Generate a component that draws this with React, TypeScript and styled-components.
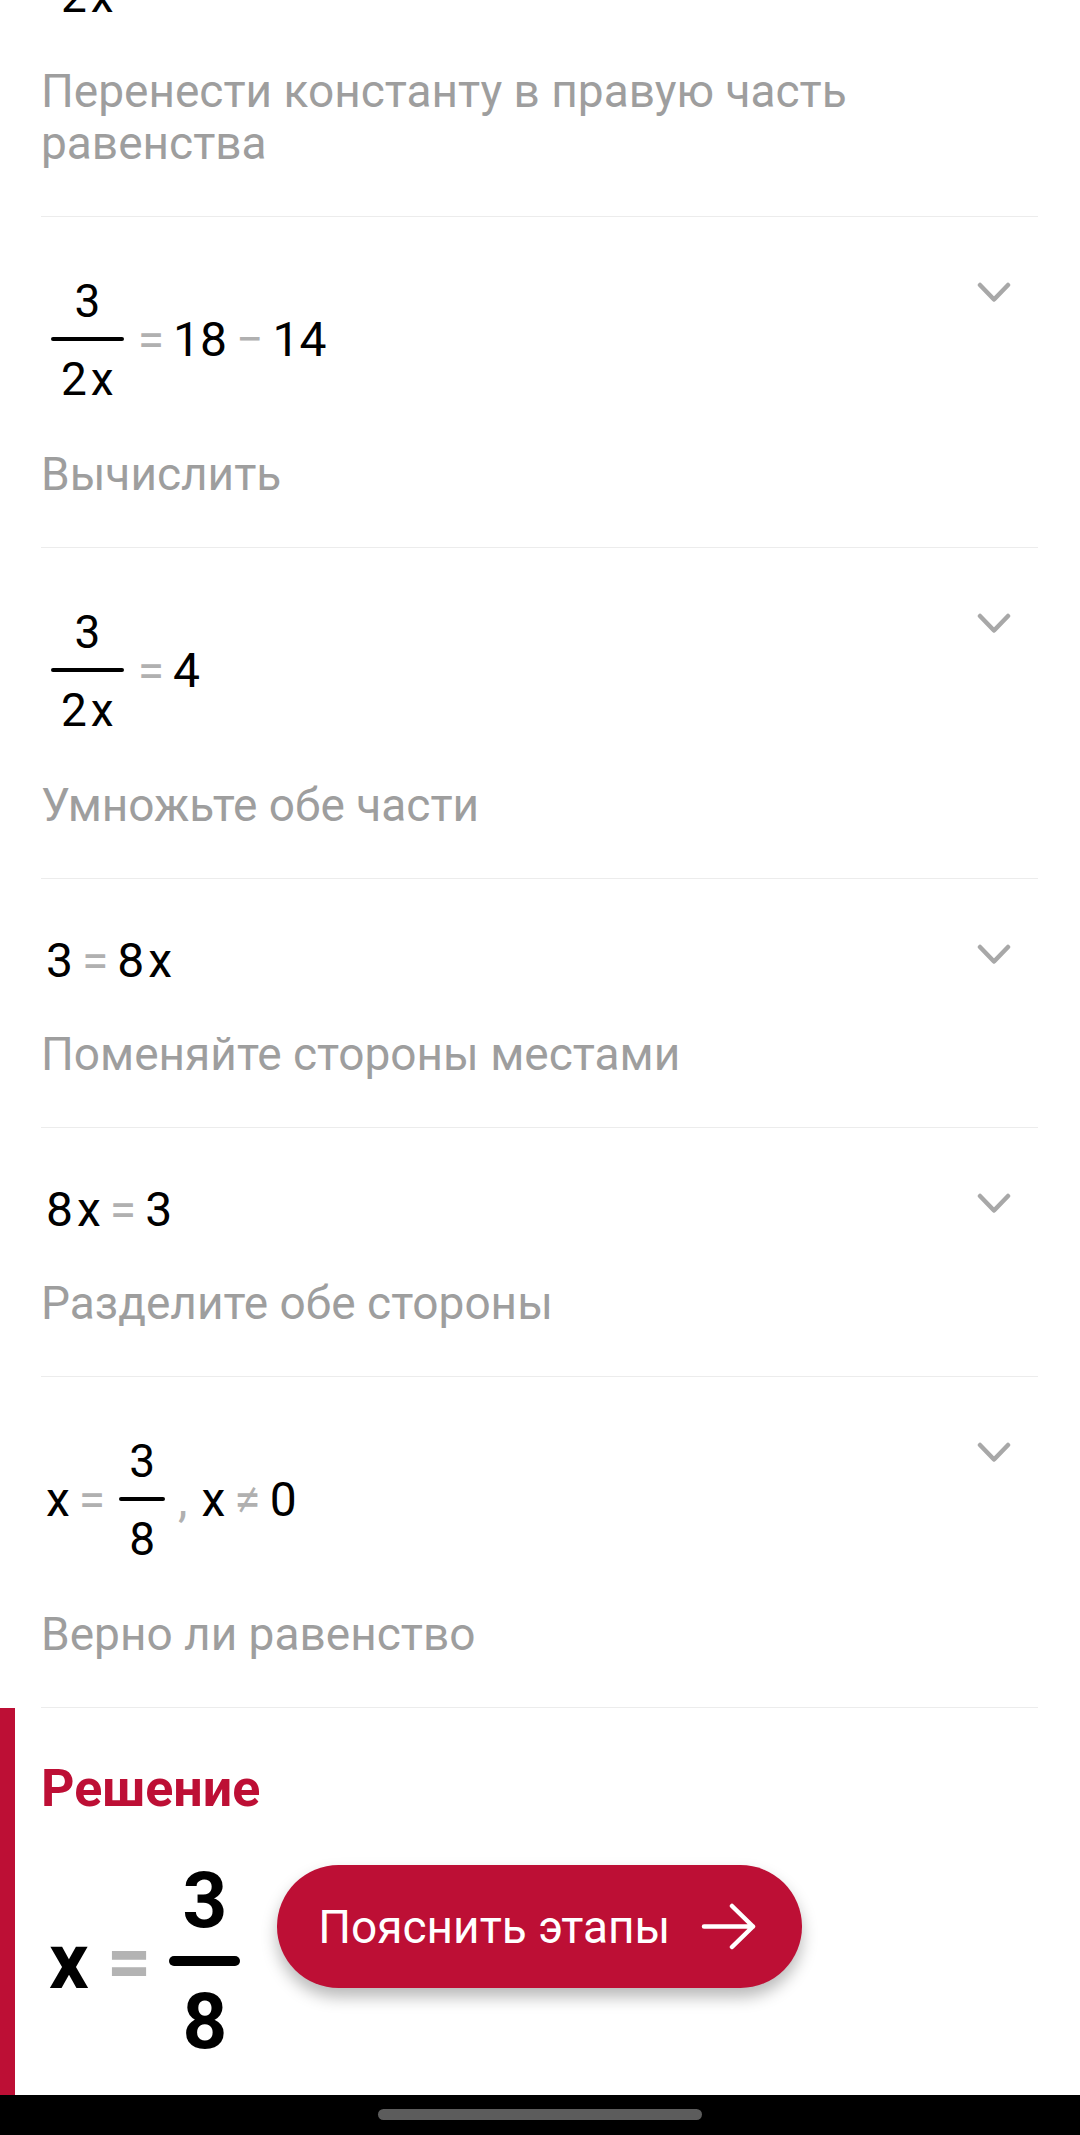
import React from "react"
import styled, { createGlobalStyle } from "styled-components"

const CRIMSON = "#bd0f35"

const GlobalStyle = createGlobalStyle`
  html, body {
    margin: 0;
    padding: 0;
    background: #fff;
  }
  body {
    font-family: Roboto, "Noto Sans", "Liberation Sans", sans-serif;
  }
`

const Page = styled.div`
  width: 1080px;
  height: 2135px;
  display: flex;
  flex-direction: column;
  overflow: hidden;
  background: #fff;
`

const StepList = styled.div`
  flex: none;
  margin-top: -166px;
  padding: 0 42px 0 41px;
`

const Step = styled.div`
  display: flex;
  align-items: flex-start;
  padding: 54px 0 47px;
  border-bottom: 1px solid #ececec;
`

const StepBody = styled.div`
  flex: 1;
  display: flex;
  flex-direction: column;
`

const Equation = styled.div`
  display: flex;
  align-items: center;
  padding-left: 5px;
  font-size: 48px;
  line-height: 56px;
  color: #000;
`

const Hint = styled.div`
  margin-top: 39px;
  font-size: 46px;
  line-height: 52px;
  color: #9e9e9e;
`

const Expand = styled.div`
  flex: none;
  display: flex;
  margin: 11px 27px 0 0;
`

const Op = styled.span`
  color: #b0b0b0;
  margin: 0 9px;
`

const Comma = styled.span`
  color: #b0b0b0;
  margin: 0 14px 0 8px;
`

const Var = styled.span<{ $tight?: boolean }>`
  margin-left: ${p => (p.$tight ? 0 : 4)}px;
`

const Frac = styled.span<{ $pad: number }>`
  display: inline-flex;
  flex-direction: column;
  align-items: center;
  margin: 0 5px;
  padding: 7px 0;

  & > span.part {
    font-size: 46px;
    line-height: 46px;
    padding: 0 ${p => p.$pad}px;
  }
`

const FracBar = styled.span<{ $thick: number }>`
  align-self: stretch;
  height: ${p => p.$thick}px;
  background: #000;
  border-radius: ${p => p.$thick / 2}px;
  margin: 13px 0 15px;
`

const Solution = styled.section`
  flex: 1;
  border-left: 15px solid ${CRIMSON};
  padding: 53px 0 0 26px;
`

const SolutionTitle = styled.h2`
  margin: 0;
  font-size: 52px;
  line-height: 56px;
  font-weight: 700;
  color: ${CRIMSON};
`

const AnswerRow = styled.div`
  display: flex;
  align-items: flex-start;
  margin-top: 46px;
  padding-left: 8px;
`

const AnswerMath = styled.div`
  display: flex;
  align-items: center;
  font-size: 78px;
  line-height: 76px;
  font-weight: 700;
  color: #000;
`

const AnswerOp = styled.span`
  color: #b3b3b3;
  margin: 0 18px;
`

const AnswerFrac = styled.span`
  display: inline-flex;
  flex-direction: column;
  align-items: center;

  & > span.part {
    padding: 0 13px;
  }
`

const AnswerBar = styled.span`
  align-self: stretch;
  height: 10px;
  border-radius: 5px;
  background: #000;
  margin: 17px 0 18px;
`

const ExplainButton = styled.button`
  display: flex;
  align-items: center;
  gap: 31px;
  height: 123px;
  margin: 2px 0 0 37px;
  padding: 0 45px 0 41px;
  border: none;
  border-radius: 62px;
  background: ${CRIMSON};
  color: #fff;
  font-family: Roboto, "Noto Sans", "Liberation Sans", sans-serif;
  font-size: 46px;
  box-shadow: 0 9px 16px rgba(0, 0, 0, 0.28);
  cursor: pointer;
`

const NavBar = styled.div`
  flex: none;
  height: 40px;
  background: #000;
  display: flex;
  align-items: center;
  justify-content: center;
`

const HomePill = styled.div`
  width: 324px;
  height: 11px;
  border-radius: 6px;
  background: #5c5c5c;
  margin-top: -2px;
`

const Chevron = () => (
  <svg width="34" height="21" viewBox="0 0 34 21">
    <polyline
      points="3,3 17,17.5 31,3"
      fill="none"
      stroke="#a8a8a8"
      strokeWidth="4.5"
      strokeLinecap="round"
      strokeLinejoin="round"
    />
  </svg>
)

const ArrowRight = () => (
  <svg width="56" height="47" viewBox="0 0 56 47">
    <path
      d="M3 23.5H52M31 3L52 23.5L31 44"
      fill="none"
      stroke="#fff"
      strokeWidth="4.5"
      strokeLinecap="round"
      strokeLinejoin="round"
    />
  </svg>
)

const Fraction: React.FC<{ num: React.ReactNode; den: React.ReactNode }> = ({ num, den }) => (
  <Frac $pad={10}>
    <span className="part">{num}</span>
    <FracBar $thick={4} />
    <span className="part">{den}</span>
  </Frac>
)

const TwoX = () => (
  <>
    2<Var>x</Var>
  </>
)

type StepData = { eq: React.ReactNode; hint: string }

const steps: StepData[] = [
  {
    eq: (
      <>
        <Fraction num="3" den={<TwoX />} />
        <Op>+</Op>14<Op>=</Op>18
      </>
    ),
    hint: "Перенести константу в правую часть равенства",
  },
  {
    eq: (
      <>
        <Fraction num="3" den={<TwoX />} />
        <Op>=</Op>18<Op>−</Op>14
      </>
    ),
    hint: "Вычислить",
  },
  {
    eq: (
      <>
        <Fraction num="3" den={<TwoX />} />
        <Op>=</Op>4
      </>
    ),
    hint: "Умножьте обе части",
  },
  {
    eq: (
      <>
        3<Op>=</Op>8<Var>x</Var>
      </>
    ),
    hint: "Поменяйте стороны местами",
  },
  {
    eq: (
      <>
        8<Var>x</Var>
        <Op>=</Op>3
      </>
    ),
    hint: "Разделите обе стороны",
  },
  {
    eq: (
      <>
        <Var $tight>x</Var>
        <Op>=</Op>
        <Fraction num="3" den="8" />
        <Comma>,</Comma>
        <Var $tight>x</Var>
        <Op>≠</Op>0
      </>
    ),
    hint: "Верно ли равенство",
  },
]

const App: React.FC = () => (
  <>
    <GlobalStyle />
    <Page>
      <StepList>
        {steps.map((step, i) => (
          <Step key={i}>
            <StepBody>
              <Equation>{step.eq}</Equation>
              <Hint>{step.hint}</Hint>
            </StepBody>
            <Expand>
              <Chevron />
            </Expand>
          </Step>
        ))}
      </StepList>

      <Solution>
        <SolutionTitle>Решение</SolutionTitle>
        <AnswerRow>
          <AnswerMath>
            <span>x</span>
            <AnswerOp>=</AnswerOp>
            <AnswerFrac>
              <span className="part">3</span>
              <AnswerBar />
              <span className="part">8</span>
            </AnswerFrac>
          </AnswerMath>
          <ExplainButton>
            <span>Пояснить этапы</span>
            <ArrowRight />
          </ExplainButton>
        </AnswerRow>
      </Solution>

      <NavBar>
        <HomePill />
      </NavBar>
    </Page>
  </>
)

export default App
